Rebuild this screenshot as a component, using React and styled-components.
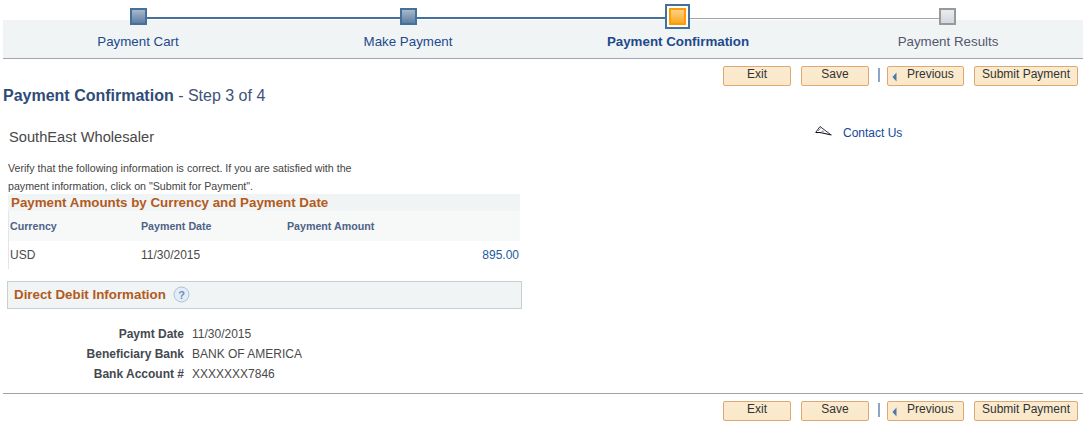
import React from 'react'
import styled, { createGlobalStyle } from 'styled-components'

const GlobalStyle = createGlobalStyle`
  html, body { margin: 0; padding: 0; background: #fff; }
  body { font-family: "Liberation Sans", Arial, sans-serif; color: #333; }
`

const Page = styled.div`
  width: 1088px;
  height: 428px;
  overflow: hidden;
`

const Stepper = styled.div`
  display: grid;
  grid-template-columns: repeat(4, 270px);
  margin-left: 3px;
  width: 1080px;
  height: 59px;
  box-sizing: border-box;
  padding-top: 20px;
  position: relative;
  &::before {
    content: '';
    position: absolute;
    left: 0;
    right: 0;
    top: 20px;
    bottom: 0;
    background: #f1f4f5;
    border-bottom: 1px solid #9ea5b5;
  }
`

const Step = styled.div`
  position: relative;
  text-align: center;
  font-size: 13.33px;
  line-height: 15px;
  padding-top: 14px;
  color: ${({ $state }) => ($state === 'todo' ? '#51586e' : '#1d4a8c')};
  font-weight: ${({ $state }) => ($state === 'current' ? 700 : 400)};
  &::before {
    content: ${({ $first }) => ($first ? 'none' : "''")};
    position: absolute;
    right: 50%;
    width: 270px;
    top: ${({ $state }) => ($state === 'todo' ? '-2px' : '-3px')};
    height: ${({ $state }) => ($state === 'todo' ? '1px' : '2px')};
    background: ${({ $state }) => ($state === 'todo' ? '#a3a3a3' : '#44709c')};
  }
`

const Node = styled.span`
  position: absolute;
  z-index: 1;
  left: 50%;
  box-sizing: border-box;
  top: -12px;
  margin-left: ${({ $state }) => ($state === 'todo' ? '-9px' : '-8px')};
  width: 17px;
  height: 17px;
  border: 2px solid ${({ $state }) => ($state === 'todo' ? '#999' : '#44709c')};
  background: ${({ $state }) =>
    $state === 'todo' ? 'linear-gradient(#e9ecef, #d3d7de)' : 'linear-gradient(#a9b8ca, #5f7fa3)'};
`

const CurrentNode = styled.span`
  position: absolute;
  z-index: 1;
  left: 50%;
  box-sizing: border-box;
  top: -16px;
  margin-left: -13px;
  width: 25px;
  height: 25px;
  border: 2px solid #44709c;
  background: #fff;
  padding: 2px;
  &::after {
    content: '';
    display: block;
    box-sizing: border-box;
    height: 100%;
    border: 2px solid #ff9c00;
    background: linear-gradient(#fdd28a, #fba922);
  }
`

const Toolbar = styled.div`
  display: flex;
  justify-content: flex-end;
  align-items: center;
  height: 20px;
  padding-right: 10px;
  margin-top: ${({ $top }) => $top}px;
`

const Button = styled.button`
  box-sizing: border-box;
  width: ${({ $w }) => $w}px;
  height: 20px;
  margin-left: ${({ $gap }) => $gap ?? 10}px;
  padding: 0 0 5px;
  border: 1px solid #dfa873;
  border-radius: 2px;
  background: linear-gradient(#faebd0, #fbe8c9);
  font-family: inherit;
  font-size: 12px;
  color: #333;
  text-align: center;
`

const PrevButton = styled(Button)`
  display: flex;
  align-items: center;
  padding: 0 0 5px 4px;
  gap: 10px;
`

const PrevArrow = styled.svg`
  width: 5px;
  height: 10px;
  margin-top: 7px;
`

const Sep = styled.span`
  width: 2px;
  height: 14px;
  margin-left: 9px;
  margin-right: -2px;
  margin-top: -2px;
  background: #8aa5c6;
`

const Heading = styled.h1`
  margin: 1px 0 0 3px;
  height: 18px;
  font-size: 16px;
  line-height: 18px;
  font-weight: 700;
  color: #2f4b78;
  span {
    font-weight: 400;
    font-size: 16px;
    color: #3d5477;
  }
`

const Main = styled.div`
  display: flex;
  margin-top: 22px;
`

const LeftCol = styled.div`
  width: 522px;
  padding-left: 8px;
  box-sizing: border-box;
  flex: none;
`

const Company = styled.div`
  margin-left: 1px;
  font-size: 14.67px;
  line-height: 20px;
  color: #484848;
`

const Intro = styled.p`
  margin: 12px 0 0 0;
  width: 350px;
  font-size: 10.67px;
  line-height: 18px;
  color: #444;
`

const Grid = styled.div`
  width: 512px;
`

const GridTitle = styled.div`
  height: 17px;
  background: #f1f4f5;
  padding-left: 3px;
  margin-top: -1px;
  font-size: 13.33px;
  line-height: 17px;
  font-weight: 700;
  color: #b35a1c;
`

const GridRow = styled.div`
  display: grid;
  grid-template-columns: 131px 146px 1fr;
  padding-left: 1px;
  border-left: 1px solid #e5e5e5;
  height: ${({ $h }) => $h}px;
  align-items: center;
  background: ${({ $head }) => ($head ? '#f7f8f8' : '#fff')};
`

const HeadCell = styled.div`
  font-size: 10.67px;
  font-weight: 700;
  color: #4e6387;
  margin-top: -1px;
`

const Cell = styled.div`
  font-size: 12px;
  color: #4a4a4a;
`

const Amount = styled(Cell)`
  text-align: right;
  color: #1d5ba0;
  padding-right: 1px;
`

const SectionBox = styled.div`
  display: flex;
  align-items: center;
  gap: 7px;
  box-sizing: border-box;
  margin: 12px 0 0 -1px;
  width: 515px;
  height: 28px;
  padding: 0 0 2px 6px;
  background: #f1f4f5;
  border: 1px solid #c9ced3;
  font-size: 13.33px;
  font-weight: 700;
  color: #b35a1c;
`

const HelpIcon = styled.svg`
  width: 17px;
  height: 17px;
  flex: none;
  margin-top: 1px;
`

const DetailList = styled.div`
  margin-top: 15px;
  display: grid;
  grid-template-columns: 176px 1fr;
  column-gap: 8px;
  grid-auto-rows: 20px;
  align-items: center;
  font-size: 12px;
`

const DetailLabel = styled.div`
  text-align: right;
  font-weight: 700;
  color: #44494f;
`

const DetailValue = styled.div`
  color: #4a4a4a;
`

const RightCol = styled.div`
  display: flex;
  align-items: center;
  gap: 11px;
  margin-left: 293px;
  height: 20px;
  margin-top: -5px;
`

const ContactIcon = styled.svg`
  flex: none;
  margin-top: -2px;
`

const ContactLink = styled.a`
  font-size: 12px;
  color: #14489a;
  padding-top: 2px;
`

const Divider = styled.div`
  height: 1px;
  margin: 9px 5px 0 3px;
  background: #a3a3a3;
`

function Actions({ top }) {
  return (
    <Toolbar $top={top}>
      <Button $w={68}>Exit</Button>
      <Button $w={68}>Save</Button>
      <Sep />
      <PrevButton $w={77} $gap={9}>
        <PrevArrow viewBox="0 0 5 10">
          <path d="M4.5 0.5V9.5L0.5 5Z" fill="#4a78a8" />
        </PrevArrow>
        Previous
      </PrevButton>
      <Button $w={104}>Submit Payment</Button>
    </Toolbar>
  )
}

function App() {
  return (
    <Page>
      <GlobalStyle />
      <Stepper>
        <Step $first $state="done">
          <Node $state="done" />
          Payment Cart
        </Step>
        <Step $state="done">
          <Node $state="done" />
          Make Payment
        </Step>
        <Step $state="current">
          <CurrentNode />
          Payment Confirmation
        </Step>
        <Step $state="todo">
          <Node $state="todo" />
          Payment Results
        </Step>
      </Stepper>
      <Actions top={7} />
      <Heading>
        Payment Confirmation <span>- Step 3 of 4</span>
      </Heading>
      <Main>
        <LeftCol>
          <Company>SouthEast Wholesaler</Company>
          <Intro>
            Verify that the following information is correct. If you are satisfied with the
            payment information, click on "Submit for Payment".
          </Intro>
          <Grid>
            <GridTitle>Payment Amounts by Currency and Payment Date</GridTitle>
            <GridRow $head $h={30}>
              <HeadCell>Currency</HeadCell>
              <HeadCell>Payment Date</HeadCell>
              <HeadCell>Payment Amount</HeadCell>
            </GridRow>
            <GridRow $h={28}>
              <Cell>USD</Cell>
              <Cell>11/30/2015</Cell>
              <Amount>895.00</Amount>
            </GridRow>
          </Grid>
          <SectionBox>
            Direct Debit Information
            <HelpIcon viewBox="0 0 17 17">
              <circle cx="8.5" cy="8.5" r="7.5" fill="#e4edf6" stroke="#a9c1dc" />
              <text x="8.5" y="12.5" textAnchor="middle" fontSize="11" fontWeight="700" fill="#6d8fc0">?</text>
            </HelpIcon>
          </SectionBox>
          <DetailList>
            <DetailLabel>Paymt Date</DetailLabel>
            <DetailValue>11/30/2015</DetailValue>
            <DetailLabel>Beneficiary Bank</DetailLabel>
            <DetailValue>BANK OF AMERICA</DetailValue>
            <DetailLabel>Bank Account #</DetailLabel>
            <DetailValue>XXXXXXX7846</DetailValue>
          </DetailList>
        </LeftCol>
        <RightCol>
          <ContactIcon width="17" height="10" viewBox="0 0 17 10">
            <path d="M1 6L5 0.5L15.5 8.5" fill="none" stroke="#333" />
            <path d="M0.5 6.5H5L16.5 9" fill="none" stroke="#111" strokeWidth="1.2" />
            <path d="M3 5L5.5 2.5" stroke="#888" />
            <path d="M6 6L8 4L9.5 6.5Z" fill="#8fa4d8" />
          </ContactIcon>
          <ContactLink>Contact Us</ContactLink>
        </RightCol>
      </Main>
      <Divider />
      <Actions top={7} />
    </Page>
  )
}

export default App
